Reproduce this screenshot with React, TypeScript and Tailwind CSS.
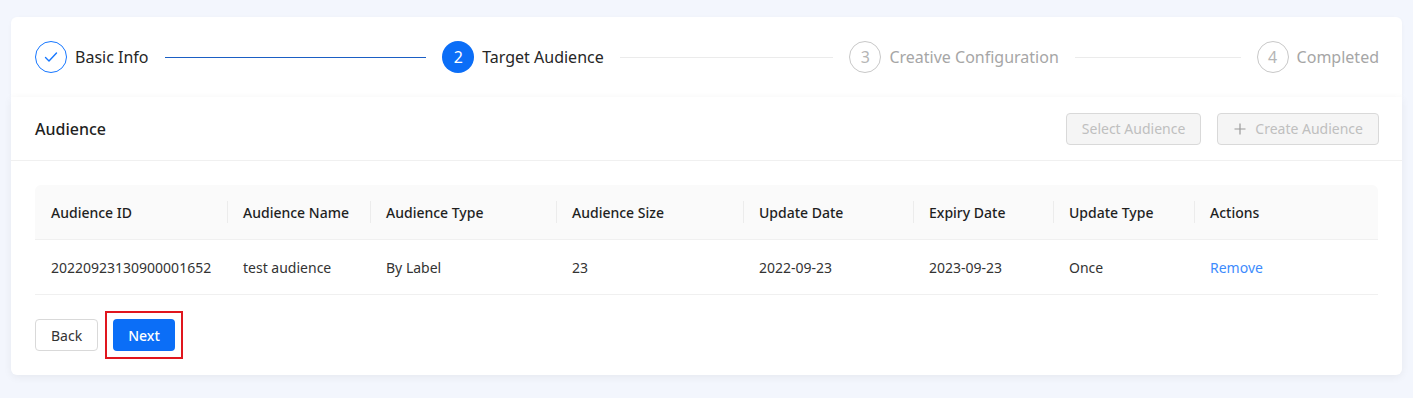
import React from "react";

const COLUMNS = [
  { title: "Audience ID", w: "w-[192px]" },
  { title: "Audience Name", w: "w-[143px]" },
  { title: "Audience Type", w: "w-[186px]" },
  { title: "Audience Size", w: "w-[187px]" },
  { title: "Update Date", w: "w-[170px]" },
  { title: "Expiry Date", w: "w-[140px]" },
  { title: "Update Type", w: "w-[141px]" },
  { title: "Actions", w: "flex-1" },
];

const ROW = [
  "20220923130900001652",
  "test audience",
  "By Label",
  "23",
  "2022-09-23",
  "2023-09-23",
  "Once",
];

function Step({
  state,
  num,
  label,
  last,
  lineDone,
}: {
  state: "done" | "active" | "wait";
  num: number;
  label: string;
  last?: boolean;
  lineDone?: boolean;
}) {
  return (
    <div className={"flex items-center " + (last ? "shrink-0" : "flex-1 mr-4")}>
      {state === "done" && (
        <div className="w-8 h-8 shrink-0 rounded-full border border-[#1677ff] flex items-center justify-center">
          <svg width="16" height="16" viewBox="0 0 16 16" fill="none">
            <path d="M2.5 8.5l3.5 3.5 7.5-8" stroke="#1677ff" strokeWidth="1.4" strokeLinecap="round" strokeLinejoin="round" />
          </svg>
        </div>
      )}
      {state === "active" && (
        <div className="w-8 h-8 shrink-0 rounded-full bg-[#0b6ef7] text-white text-[16px] flex items-center justify-center">
          {num}
        </div>
      )}
      {state === "wait" && (
        <div className="w-8 h-8 shrink-0 rounded-full border border-[#c8c8c8] text-[#b5b5b5] text-[16px] flex items-center justify-center">
          {num}
        </div>
      )}
      <span
        className={
          "ml-2 text-[16px] whitespace-nowrap " +
          (state === "wait" ? "text-[#a6a6a6]" : "text-[#262626]")
        }
      >
        {label}
      </span>
      {!last && (
        <div
          className={
            "flex-1 ml-4 h-px " + (lineDone ? "bg-[#1b5fc4]" : "bg-[#ebebeb]")
          }
        />
      )}
    </div>
  );
}

export default function App() {
  return (
    <div
      className="min-h-[398px] w-full bg-[#f3f6fd] pt-[17px] px-[11px] pb-[22px]"
      style={{ fontFamily: '"Noto Sans", "Open Sans", sans-serif' }}
    >
      {/* Steps */}
      <div className="bg-white rounded-t-md h-[80px] flex items-center pl-6 pr-[23px] shadow-[0_1px_4px_rgba(0,0,0,0.03)]">
        <Step state="done" num={1} label="Basic Info" lineDone />
        <Step state="active" num={2} label="Target Audience" />
        <Step state="wait" num={3} label="Creative Configuration" />
        <Step state="wait" num={4} label="Completed" last />
      </div>

      {/* Audience card */}
      <div className="bg-white rounded-b-md shadow-[0_2px_8px_rgba(0,0,0,0.06)]">
        <div className="h-[64px] flex items-center justify-between pl-6 pr-[23px] border-b border-[#f0f0f0]">
          <span className="text-[16px] font-medium text-[#1f1f1f]">Audience</span>
          <div className="flex items-center gap-4">
            <button className="h-8 px-[15px] rounded border border-[#d9d9d9] bg-[#f5f5f5] text-[14px] text-[#bfbfbf]">
              Select Audience
            </button>
            <button className="h-8 px-[15px] rounded border border-[#d9d9d9] bg-[#f5f5f5] text-[14px] text-[#bfbfbf] flex items-center gap-2">
              <svg width="14" height="14" viewBox="0 0 14 14" fill="none">
                <path d="M7 1.5v11M1.5 7h11" stroke="#9a9a9a" strokeWidth="1.2" />
              </svg>
              Create Audience
            </button>
          </div>
        </div>

        <div className="px-6 pt-6 pb-6">
          <div className="rounded-t-md overflow-hidden">
            <div className="flex h-[55px] bg-[#fafafa] border-b border-[#f0f0f0] text-[14px] font-medium text-[#1f1f1f]">
              {COLUMNS.map((c, i) => (
                <div key={c.title} className={c.w + " relative flex items-center px-4"}>
                  {i > 0 && (
                    <span className="absolute left-0 top-1/2 -translate-y-1/2 w-px h-[22px] bg-[#ececec]" />
                  )}
                  {c.title}
                </div>
              ))}
            </div>
            <div className="flex h-[55px] border-b border-[#f0f0f0] text-[14px] text-[#333]">
              {COLUMNS.map((c, i) => (
                <div key={c.title} className={c.w + " flex items-center px-4"}>
                  {i < ROW.length ? (
                    ROW[i]
                  ) : (
                    <span className="text-[#3d8bfd]">Remove</span>
                  )}
                </div>
              ))}
            </div>
          </div>

          <div className="flex items-center gap-[15px] mt-6">
            <button className="h-8 px-[15px] rounded border border-[#d9d9d9] bg-white text-[14px] text-[#333]">
              Back
            </button>
            <div className="outline-2 outline-[#e0161e] outline-offset-[6px]">
              <button className="h-8 px-[15px] rounded bg-[#0b6ef7] text-[14px] font-medium text-white">
                Next
              </button>
            </div>
          </div>
        </div>
      </div>
    </div>
  );
}
